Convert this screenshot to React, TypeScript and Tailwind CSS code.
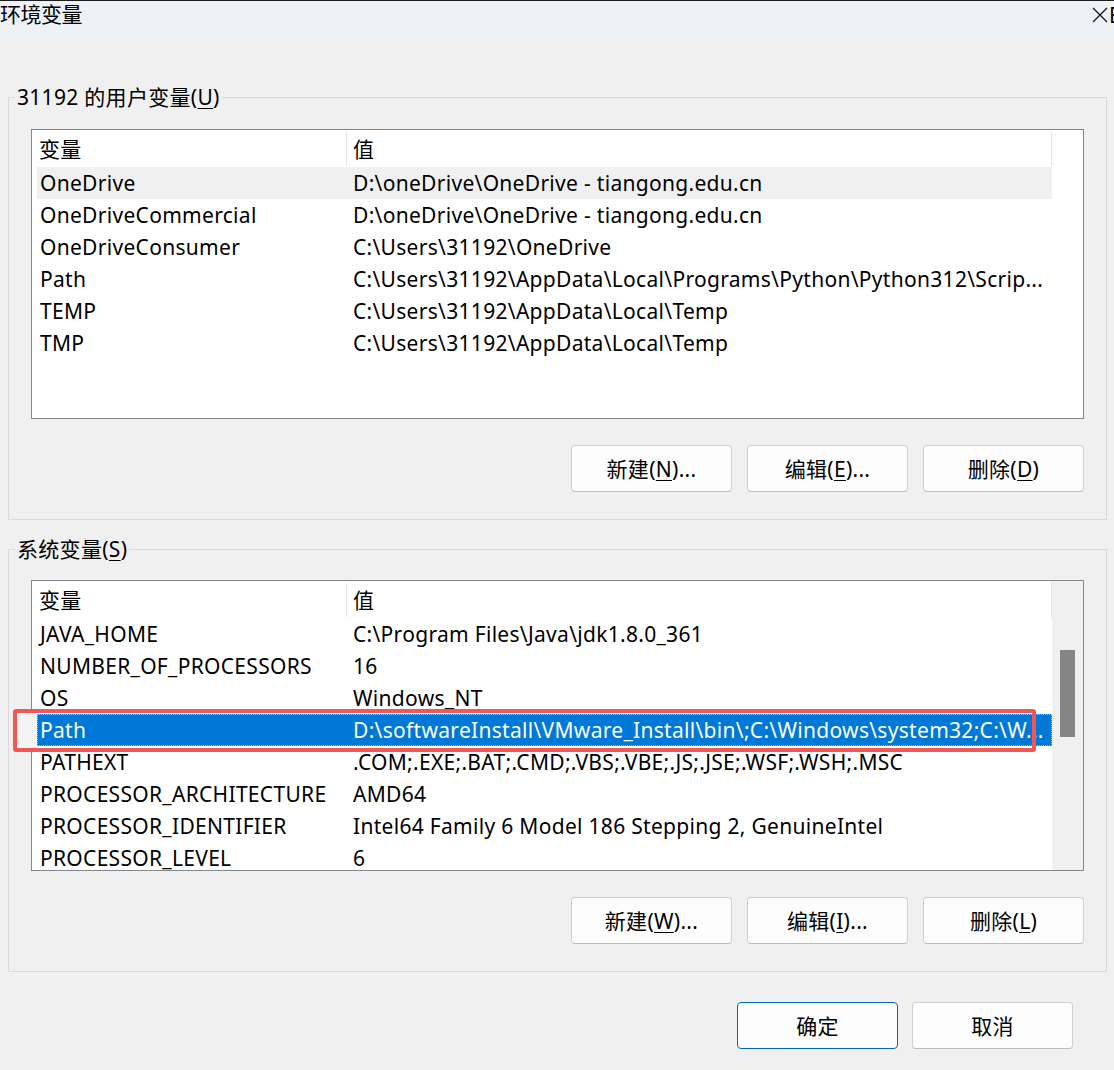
import React from "react";

const userVars: [string, string][] = [
  ["OneDrive", "D:\\oneDrive\\OneDrive - tiangong.edu.cn"],
  ["OneDriveCommercial", "D:\\oneDrive\\OneDrive - tiangong.edu.cn"],
  ["OneDriveConsumer", "C:\\Users\\31192\\OneDrive"],
  ["Path", "C:\\Users\\31192\\AppData\\Local\\Programs\\Python\\Python312\\Scrip..."],
  ["TEMP", "C:\\Users\\31192\\AppData\\Local\\Temp"],
  ["TMP", "C:\\Users\\31192\\AppData\\Local\\Temp"],
];

const sysVars: [string, string][] = [
  ["JAVA_HOME", "C:\\Program Files\\Java\\jdk1.8.0_361"],
  ["NUMBER_OF_PROCESSORS", "16"],
  ["OS", "Windows_NT"],
  ["Path", "D:\\softwareInstall\\VMware_Install\\bin\\;C:\\Windows\\system32;C:\\W..."],
  ["PATHEXT", ".COM;.EXE;.BAT;.CMD;.VBS;.VBE;.JS;.JSE;.WSF;.WSH;.MSC"],
  ["PROCESSOR_ARCHITECTURE", "AMD64"],
  ["PROCESSOR_IDENTIFIER", "Intel64 Family 6 Model 186 Stepping 2, GenuineIntel"],
  ["PROCESSOR_LEVEL", "6"],
];

function Header() {
  return (
    <div className="flex h-[37px] w-[1020px] shrink-0 items-center bg-white">
      <div className="flex h-[34px] w-[315px] items-center border-r border-[#e5e5e5] pl-[7px]">变量</div>
      <div className="flex h-[34px] flex-1 items-center border-r border-[#e5e5e5] pl-[6px]">值</div>
    </div>
  );
}

function Row({ name, value, hover, selected }: { name: string; value: string; hover?: boolean; selected?: boolean }) {
  const cls = selected
    ? "bg-[#0078d7] text-white outline outline-1 outline-dotted outline-[#8fc3ee] -outline-offset-1"
    : hover
    ? "bg-[#f0f0f0]"
    : "";
  return (
    <div className={`ml-[5px] flex h-[32px] w-[1015px] shrink-0 items-center whitespace-nowrap ${cls}`}>
      <div className="w-[310px] overflow-hidden pl-[3px]">{name}</div>
      <div className="flex-1 overflow-hidden pl-[6px]">{value}</div>
    </div>
  );
}

function Btn({ children, primary }: { children: React.ReactNode; primary?: boolean }) {
  return (
    <div
      className={`flex h-[47px] w-[161px] items-center justify-center rounded-[4px] border bg-[#fdfdfd] ${
        primary ? "border-[#0067c0]" : "border-[#d0d0d0] border-b-[#bcbcbc]"
      }`}
    >
      {children}
    </div>
  );
}

function U({ c }: { c: string }) {
  return <span className="underline decoration-1 underline-offset-[3px]">{c}</span>;
}

export default function App() {
  return (
    <div className="relative h-[1070px] w-[1114px] overflow-hidden bg-[#f0f0f0] font-['Noto_Sans','Noto_Sans_CJK_SC',sans-serif] text-[21px] leading-[28px] tracking-[0.3px] text-black">
      {/* title bar */}
      <div className="relative flex h-[40px] items-start border-t border-[#1e1e1e] bg-[#eef2f7]">
        <div className="mt-[-1px] pl-0 tracking-[-0.5px]">环境变量</div>
        <svg className="absolute left-[1092px] top-[6px]" width="16" height="16" viewBox="0 0 16 16">
          <path d="M1 1 L15 15 M15 1 L1 15" stroke="#1a1a1a" strokeWidth="1.4" fill="none" />
        </svg>
        <div className="absolute left-[1109px] top-[0px]">E</div>
      </div>

      {/* user variables */}
      <div className="relative ml-[8px] mt-[57px] w-[1099px] border border-[#dadada] px-[22px] pb-[27px] pt-[31px]">
        <div className="absolute left-[6px] top-[-15px] bg-[#f0f0f0] px-[2px]">
          31192 的用户变量(<U c="U" />)
        </div>
        <div className="flex h-[290px] flex-col overflow-hidden border border-[#828790] bg-white">
          <Header />
          {userVars.map(([n, v], i) => (
            <Row key={n} name={n} value={v} hover={i === 0} />
          ))}
        </div>
        <div className="mt-[26px] flex justify-end gap-[15px]">
          <Btn>
            新建(<U c="N" />)...
          </Btn>
          <Btn>
            编辑(<U c="E" />)...
          </Btn>
          <Btn>
            删除(<U c="D" />)
          </Btn>
        </div>
      </div>

      {/* system variables */}
      <div className="relative ml-[8px] mt-[29px] w-[1099px] border border-[#dadada] px-[22px] pb-[27px] pt-[30px]">
        <div className="absolute left-[6px] top-[-15px] bg-[#f0f0f0] px-[2px]">
          系统变量(<U c="S" />)
        </div>
        <div className="flex h-[291px] overflow-hidden border border-[#828790] bg-white">
          <div className="flex w-[1020px] flex-col overflow-hidden">
            <Header />
            {sysVars.map(([n, v], i) => (
              <Row key={n} name={n} value={v} selected={i === 3} />
            ))}
          </div>
          <div className="flex w-[31px] flex-col items-center bg-[#f0f0f0] pt-[69px]">
            <div className="h-[87px] w-[15px] bg-[#858585]" />
          </div>
        </div>
        <div className="mt-[26px] flex justify-end gap-[15px]">
          <Btn>
            新建(<U c="W" />)...
          </Btn>
          <Btn>
            编辑(<U c="I" />)...
          </Btn>
          <Btn>
            删除(<U c="L" />)
          </Btn>
        </div>
      </div>

      {/* dialog buttons */}
      <div className="mt-[30px] flex justify-end gap-[14px] pr-[41px]">
        <Btn primary>确定</Btn>
        <Btn>取消</Btn>
      </div>

      {/* annotation */}
      <div className="absolute left-[17px] top-[713px] h-[35px] w-[20px] bg-[#f4f4f4]" />
      <div className="pointer-events-none absolute left-[13px] top-[709px] h-[43px] w-[1023px] rounded-[3px] border-[4px] border-[#f25757]" />
    </div>
  );
}
